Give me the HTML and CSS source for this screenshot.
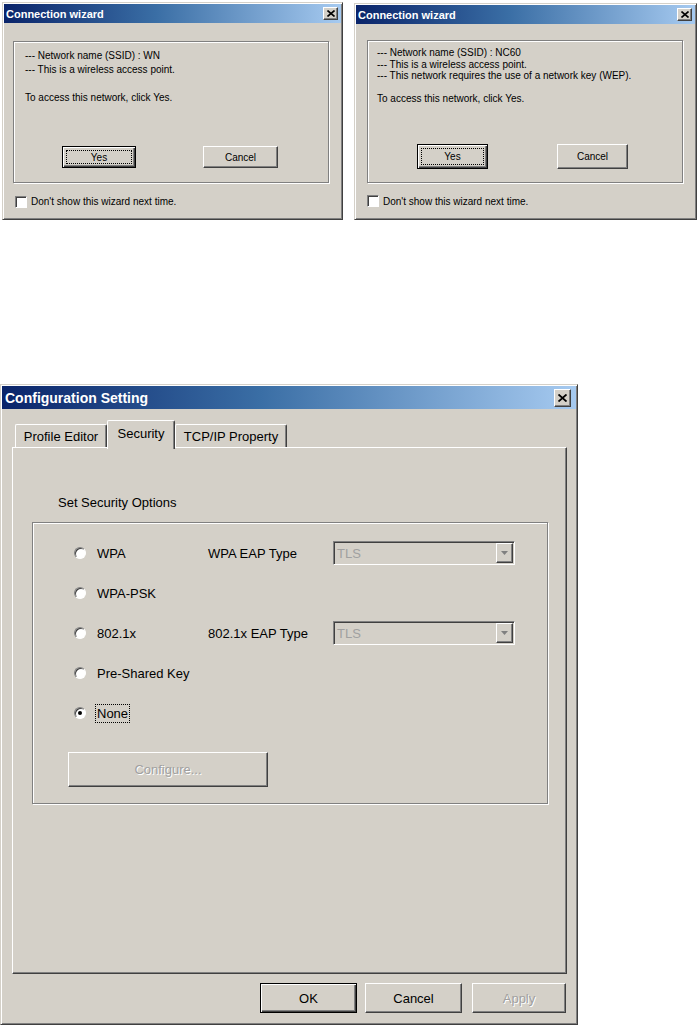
FILE: index.html
```html
<!DOCTYPE html>
<html lang="en">
<head>
    <meta charset="UTF-8">
    <title>Connection wizard / Configuration Setting</title>
    <link rel="stylesheet" href="styles.css">
</head>
<body>
    <div class="wizards">
        <!-- first wizard: open network -->
        <div class="win wiz wiz-a">
            <div class="titlebar">
                <span class="title">Connection wizard</span>
                <span class="close"><svg width="8" height="7" viewBox="0 0 8 7"><path d="M0.5 0.5L7.5 6.5M7.5 0.5L0.5 6.5" stroke="#000" stroke-width="1.6"/></svg></span>
            </div>
            <div class="etched wiz-box">
                <div class="msg">
                    <p>--- Network name (SSID) : WN</p>
                    <p>--- This is a wireless access point.</p>
                    <p class="gap">To access this network, click Yes.</p>
                </div>
                <div class="wiz-btns">
                    <button class="btn btn-def"><span class="focus">Yes</span></button>
                    <button class="btn">Cancel</button>
                </div>
            </div>
            <div class="check"><span class="checkbox"></span>Don't show this wizard next time.</div>
        </div>

        <!-- second wizard: WEP network -->
        <div class="win wiz wiz-b">
            <div class="titlebar">
                <span class="title">Connection wizard</span>
                <span class="close"><svg width="8" height="7" viewBox="0 0 8 7"><path d="M0.5 0.5L7.5 6.5M7.5 0.5L0.5 6.5" stroke="#000" stroke-width="1.6"/></svg></span>
            </div>
            <div class="etched wiz-box">
                <div class="msg">
                    <p>--- Network name (SSID) : NC60</p>
                    <p>--- This is a wireless access point.</p>
                    <p>--- This network requires the use of a network key (WEP).</p>
                    <p class="gap">To access this network, click Yes.</p>
                </div>
                <div class="wiz-btns">
                    <button class="btn btn-def"><span class="focus">Yes</span></button>
                    <button class="btn">Cancel</button>
                </div>
            </div>
            <div class="check"><span class="checkbox"></span>Don't show this wizard next time.</div>
        </div>
    </div>

    <div class="win cfg">
        <div class="titlebar">
            <span class="title">Configuration Setting</span>
            <span class="close"><svg width="9" height="8" viewBox="0 0 9 8"><path d="M0.5 0.5L8.5 7.5M8.5 0.5L0.5 7.5" stroke="#000" stroke-width="1.8"/></svg></span>
        </div>
        <div class="cfg-body">
            <div class="tabs">
                <div class="tab tab-1">Profile Editor</div>
                <div class="tab tab-2 on">Security</div>
                <div class="tab tab-3">TCP/IP Property</div>
            </div>
            <div class="panel">
                <div class="caption">Set Security Options</div>
                <div class="etched opts">
                    <div class="grid">
                        <div class="opt"><span class="radio"></span>WPA</div>
                        <div class="lbl">WPA EAP Type</div>
                        <div class="combo"><span>TLS</span><span class="drop"><svg width="7" height="4" viewBox="0 0 7 4"><path d="M0 0H7L3.5 4Z" fill="#808080"/></svg></span></div>

                        <div class="opt"><span class="radio"></span>WPA-PSK</div>
                        <div></div>
                        <div></div>

                        <div class="opt"><span class="radio"></span>802.1x</div>
                        <div class="lbl">802.1x EAP Type</div>
                        <div class="combo"><span>TLS</span><span class="drop"><svg width="7" height="4" viewBox="0 0 7 4"><path d="M0 0H7L3.5 4Z" fill="#808080"/></svg></span></div>

                        <div class="opt"><span class="radio"></span>Pre-Shared Key</div>
                        <div></div>
                        <div></div>

                        <div class="opt"><span class="radio checked"></span><span class="dotted">None</span></div>
                        <div></div>
                        <div></div>
                    </div>
                    <button class="btn btn-off configure">Configure...</button>
                </div>
            </div>
            <div class="actions">
                <button class="btn btn-def act ok">OK</button>
                <button class="btn act">Cancel</button>
                <button class="btn btn-off act apply">Apply</button>
            </div>
        </div>
    </div>
</body>
</html>
```

FILE: styles.css
```css
*{
    margin: 0;
    padding: 0;
    box-sizing: border-box;
}
body{
    background: #fff;
    font-family: "Liberation Sans", Arial, sans-serif;
    color: #000;
}

/* window frame */
.win{
    background: #d4d0c8;
    border: 1px solid;
    border-color: #d4d0c8 #404040 #404040 #d4d0c8;
    box-shadow: inset 1px 1px #fff, inset -1px -1px #808080;
    padding: 1px;
}
.titlebar{
    display: flex;
    align-items: center;
    justify-content: space-between;
    background: linear-gradient(to right, #0a246a, #3a6ea5 45%, #a6caf0);
    color: #fff;
    font-weight: bold;
}
.close{
    display: flex;
    align-items: center;
    justify-content: center;
    background: #d4d0c8;
    border: 1px solid;
    border-color: #fff #404040 #404040 #fff;
    box-shadow: inset -1px -1px #808080;
}

.etched{
    border: 1px solid #808080;
    box-shadow: inset 1px 1px #fff, 1px 1px #fff;
}

/* buttons */
.btn{
    display: flex;
    align-items: center;
    justify-content: center;
    background: #d4d0c8;
    border: 1px solid;
    border-color: #fff #404040 #404040 #fff;
    box-shadow: inset -1px -1px #808080;
    font-family: inherit;
    color: #000;
}
.btn-def{
    border-color: #000;
    box-shadow: inset 1px 1px #fff, inset -1px -1px #404040, inset -2px -2px #808080;
}
.btn-off{
    color: #a0a0a0;
    text-shadow: 1px 1px #fff;
}

/* connection wizards */
.wizards{
    display: flex;
}
.wiz{
    font-size: 10px;
}
.wiz .titlebar{
    height: 19px;
    padding: 0 3px 0 2px;
    font-size: 11px;
}
.wiz .close{
    width: 15px;
    height: 13px;
}
.wiz-a{
    width: 341px;
    height: 218px;
    margin: 2px 0 0 2px;
}
.wiz-b{
    width: 343px;
    height: 217px;
    margin: 3px 0 0 11px;
}
.wiz-box{
    width: 316px;
}
.wiz-a .wiz-box{
    margin: 18px 0 0 9px;
    padding-bottom: 14px;
}
.wiz-b .wiz-box{
    margin: 16px 0 0 11px;
    padding-bottom: 13px;
}
.msg p{
    white-space: nowrap;
}
.wiz-a .msg{
    padding: 7px 0 0 11px;
    line-height: 14px;
}
.wiz-a .msg .gap{
    margin-top: 14px;
}
.wiz-b .msg{
    padding: 6px 0 0 9px;
    line-height: 11.5px;
}
.wiz-b .msg .gap{
    margin-top: 11.5px;
}
.wiz-btns{
    display: flex;
}
.wiz-btns .btn{
    font-size: 10px;
}
.wiz-a .wiz-btns{
    margin-top: 41px;
    padding-left: 48px;
    gap: 67px;
}
.wiz-a .wiz-btns .btn{
    width: 74px;
    height: 22px;
}
.wiz-a .wiz-btns .btn + .btn{
    width: 75px;
}
.wiz-b .wiz-btns{
    margin-top: 39px;
    padding-left: 49px;
    gap: 69px;
}
.wiz-b .wiz-btns .btn{
    width: 71px;
    height: 25px;
}
.focus{
    display: flex;
    align-items: center;
    justify-content: center;
    width: calc(100% - 6px);
    height: calc(100% - 6px);
    border: 1px dotted #000;
}
.check{
    display: flex;
    align-items: center;
    gap: 4px;
    height: 13px;
    margin: 12px 0 0 11px;
    white-space: nowrap;
}
.checkbox{
    width: 12px;
    height: 12px;
    background: #fff;
    border: 1px solid;
    border-color: #808080 #fff #fff #808080;
    box-shadow: inset 1px 1px #404040;
}

/* configuration setting */
.cfg{
    width: 578px;
    height: 641px;
    margin-top: 164px;
    font-size: 13px;
}
.cfg .titlebar{
    height: 23px;
    padding: 0 5px 0 3px;
    font-size: 14px;
}
.cfg .close{
    width: 17px;
    height: 18px;
}
.cfg-body{
    padding: 0 9px 0 10px;
}
.tabs{
    display: flex;
    align-items: flex-end;
    margin-top: 11px;
    padding-left: 3px;
}
.tab{
    display: flex;
    align-items: center;
    justify-content: center;
    height: 23px;
    background: #d4d0c8;
    border-top: 1px solid #fff;
    border-left: 1px solid #fff;
    border-right: 1px solid #404040;
    box-shadow: inset -1px 0 #808080;
    border-radius: 2px 2px 0 0;
    white-space: nowrap;
}
.tab-1{
    width: 92px;
}
.tab-2{
    width: 68px;
}
.tab-3{
    width: 112px;
}
.tab.on{
    position: relative;
    z-index: 1;
    height: 29px;
    margin-bottom: -2px;
    padding-bottom: 4px;
}
.panel{
    width: 555px;
    height: 527px;
    border: 1px solid;
    border-color: #fff #404040 #404040 #fff;
    box-shadow: inset -1px -1px #808080;
    padding: 47px 0 0 0;
}
.caption{
    line-height: 16px;
    padding-left: 45px;
}
.opts{
    width: 516px;
    height: 282px;
    margin: 11px 0 0 19px;
    padding-top: 10px;
}
.grid{
    display: grid;
    grid-template-columns: 134px 125px 182px;
    grid-auto-rows: 40px;
    align-items: center;
    padding-left: 41px;
}
.opt{
    display: flex;
    align-items: center;
    gap: 11px;
    white-space: nowrap;
}
.radio{
    position: relative;
    width: 12px;
    height: 12px;
    border-radius: 50%;
    background: #fff;
    border: 1px solid;
    border-color: #808080 #fff #fff #808080;
    box-shadow: inset 1px 1px #404040;
}
.radio.checked::after{
    content: "";
    position: absolute;
    left: 3px;
    top: 3px;
    width: 4px;
    height: 4px;
    border-radius: 50%;
    background: #000;
}
.dotted{
    outline: 1px dotted #000;
    outline-offset: 1px;
}
.lbl{
    white-space: nowrap;
}
.combo{
    display: flex;
    align-items: center;
    justify-content: space-between;
    height: 24px;
    padding: 0 1px 0 3px;
    border: 1px solid;
    border-color: #808080 #fff #fff #808080;
    box-shadow: inset 1px 1px #404040;
    color: #a0a0a0;
}
.drop{
    display: flex;
    align-items: center;
    justify-content: center;
    width: 17px;
    height: 20px;
    background: #d4d0c8;
    border: 1px solid;
    border-color: #fff #404040 #404040 #fff;
    box-shadow: inset -1px -1px #808080;
}
.configure{
    width: 200px;
    height: 35px;
    margin: 19px 0 0 35px;
    font-size: 13px;
}
.actions{
    display: flex;
    justify-content: flex-end;
    width: 554px;
    margin-top: 9px;
}
.act{
    width: 97px;
    height: 30px;
    font-size: 13px;
}
.ok{
    margin-right: 8px;
}
.apply{
    width: 94px;
    margin-left: 10px;
}
```
